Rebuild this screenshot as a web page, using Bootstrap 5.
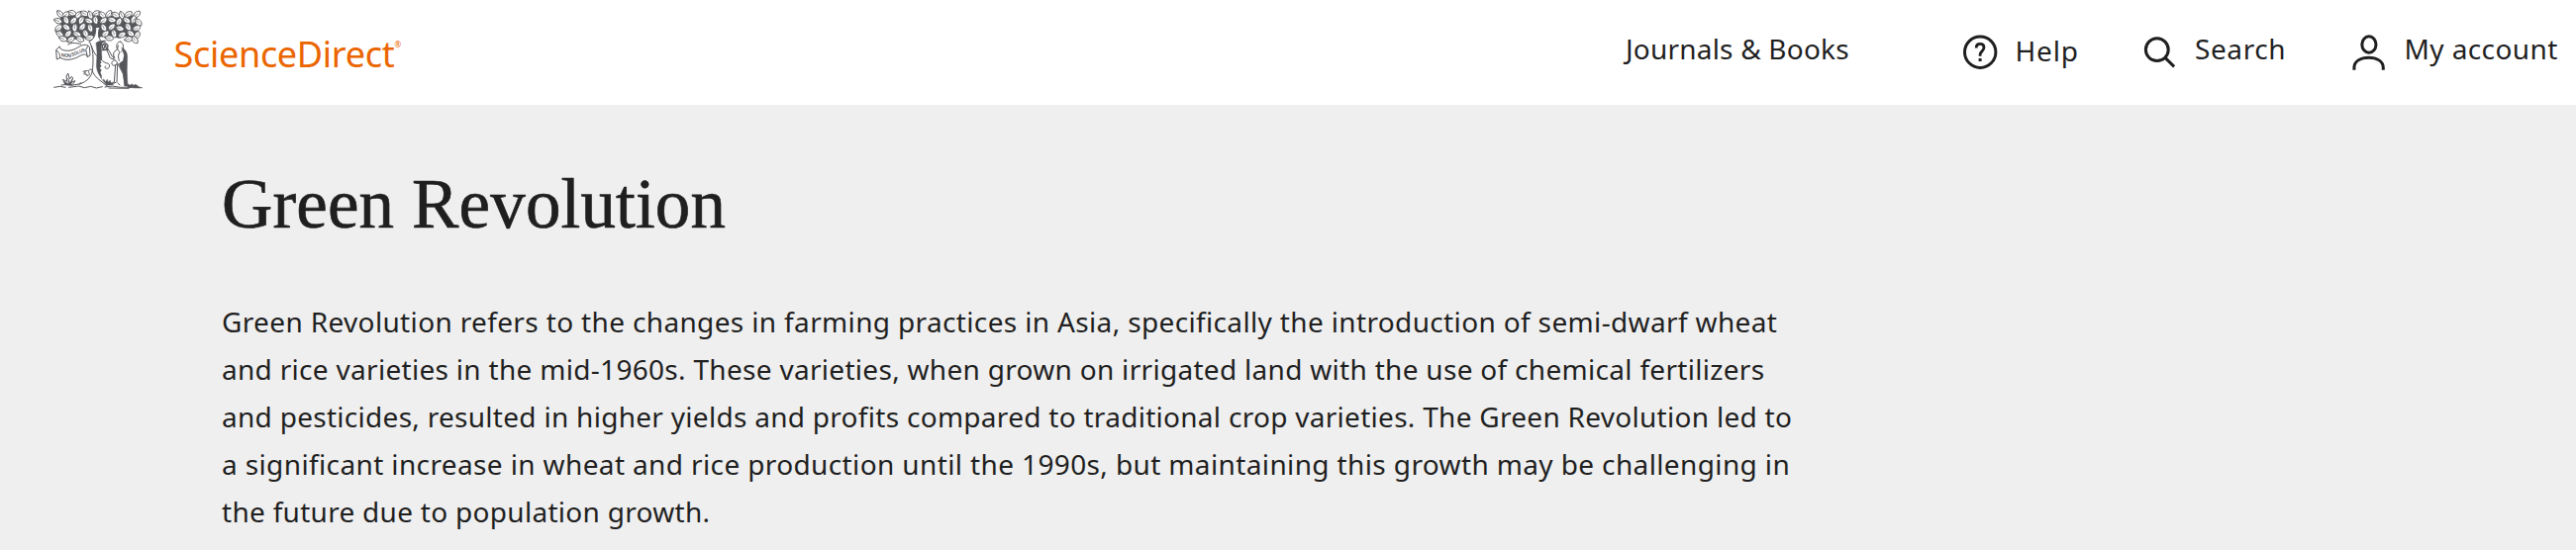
<!DOCTYPE html>
<html lang="en">

<head>
    <meta charset="UTF-8">
    <meta name="viewport" content="width=device-width, initial-scale=1">
    <title>Green Revolution | ScienceDirect</title>
    <link href="https://cdn.jsdelivr.net/npm/bootstrap@5.3.0/dist/css/bootstrap.min.css" rel="stylesheet">
    <style>
        body {
            background: #efefef;
            color: #1f1f1f;
            font-family: "Noto Sans", sans-serif;
            font-size: 28px;
            line-height: 48px;
        }

        .site-header {
            height: 106px;
            padding: 10px 17.5px 0 54px;
        }

        .brand-name {
            margin: 21px 0 0 31.5px;
            color: #eb6500;
            font-size: 36px;
            letter-spacing: -0.3px;
        }

        .brand-mark {
            margin-top: 30px;
            color: #eb6500;
            font-size: 8px;
            line-height: 10px;
        }

        .site-nav {
            padding-top: 15px;
        }

        .site-nav a {
            color: inherit;
            text-decoration: none;
            white-space: nowrap;
        }

        .nav-icon {
            width: 40px;
            height: 44px;
            fill: none;
            stroke: currentColor;
            stroke-width: 3;
        }

        .link-journals {
            width: 225px;
            margin-right: 113px;
            letter-spacing: 0.2px;
        }

        .link-help {
            width: 120px;
            margin: 2px 60px 0 0;
            gap: 15.5px;
            letter-spacing: 0.8px;
        }

        .link-search {
            width: 149.5px;
            margin-right: 62.5px;
            gap: 17px;
            letter-spacing: 0.6px;
        }

        .link-account {
            width: 212.5px;
            gap: 16.5px;
            letter-spacing: 0.4px;
        }

        .topic {
            padding: 60px 0 0 224px;
        }

        .topic h1 {
            margin-bottom: 55px;
            font-family: "Liberation Serif", serif;
            font-size: 71px;
            font-weight: 400;
            line-height: 80px;
            letter-spacing: 0.15px;
            -webkit-text-stroke: 0.7px #1f1f1f;
        }

        .topic p span {
            display: block;
            white-space: nowrap;
        }

        .ls-1 { letter-spacing: 0.352px; }
        .ls-2 { letter-spacing: 0.3px; }
        .ls-3 { letter-spacing: 0.285px; }
        .ls-4 { letter-spacing: 0.375px; }
        .ls-5 { letter-spacing: 0.29px; }
    </style>
</head>

<body>

    <header class="site-header bg-white d-flex justify-content-between align-items-start">
        <div class="d-flex align-items-start">
            <svg width="90" height="80" viewBox="42 30 270 240" fill="none" stroke="#55565a" stroke-width="3"
                stroke-linecap="round" stroke-linejoin="round">
                <defs>
                    <g id="leaf">
                        <path d="M-13 0C-10-10 6-11 13-2C9 9-6 11-13 0Z" fill="#fff" stroke-width="2.6" />
                        <path d="M-9 0C-3-2 1 1 3 0" stroke-width="1.8" />
                    </g>
                </defs>
                <!-- canopy -->
                <path d="M62 45L110 48 160 46 210 48 294 46 298 103 284 118 262 110 240 116 205 106 180 114 152 112 120 120 84 118 64 106Z"
                    fill="#55565a" stroke="none" />
                <g id="leaves"></g>
                <!-- trunk -->
                <path d="M152 128C163 148 163 178 161 205C160 232 146 246 120 256L190 262 203 256C190 240 182 224 182 200L183 128C177 117 176 103 181 84L170 84C169 108 165 118 152 128Z"
                    fill="#fff" stroke="none" />
                <path d="M152 128C163 148 163 178 161 205C160 232 146 246 120 256M170 82C171 104 166 118 150 127M181 86C177 102 178 112 184 122" />
                <path d="M171 130C180 123 192 122 202 124L190 130 187 142 189 180 184 184 187 190 183 194 187 201 182 206 187 212 184 220 188 230 187 237C179 226 173 215 172 200L174 160Z"
                    fill="#55565a" stroke-width="1" />
                <path d="M157 139C163 158 170 168 183 178C194 188 200 192 207 192C214 195 213 207 205 208C198 209 196 203 200 200M158 211C163 226 172 236 183 244L206 262" />
                <path d="M155 210C147 210 147 218 151 223C151 230 143 232 141 228M145 214L132 217 135 220 140 219M134 224L144 226" />
                <!-- ribbon -->
                <path d="M60 142L50 151 52 180 62 175C84 187 107 179 125 168C137 163 144 165 145 173L153 168 151 142C142 132 128 136 116 144C98 155 80 157 65 149L60 142Z"
                    fill="#fff" />
                <path d="M52 154C61 159 61 166 62 175M146 140L140 151 145 171M86 135C98 127 115 131 125 134" />
                <!-- old man and his staff -->
                <path d="M246 126C233 126 232 138 235 149L224 160 225 180 214 176 203 150M207 148L220 171 228 174M246 127C258 134 254 151 248 157M238 138L236 150 243 158M228 182C218 184 215 195 224 199L232 197 236 189 228 182" />
                <path d="M230 198L226 250M236 196L234 249M237 193L253 223 259 260M242 160C237 167 238 175 241 184M231 250L226 252M237 252L243 258" />
                <path d="M249 144C261 150 267 161 266 176L265 215 267 261 257 261 254 226 243 202 241 193 253 184 256 168Z"
                    fill="#55565a" stroke-width="1" />
                <path d="M190 137L198 130 207 137 205 149 195 151 190 145ZM195 136L203 145M202 134L195 146M190 152L206 151" stroke-width="4" />
                <!-- ground and grass -->
                <path d="M44 265L62 262 78 265M66 258C80 254 90 261 102 258L118 255 126 251M89 265L118 261 136 266 155 262 172 267 190 263M198 264L220 261 245 265 281 264M286 266L310 266M210 267L270 268" />
                <path d="M77 255L70 241 83 247 81 231 86 222 91 240 97 232 101 237 96 250 108 245 100 256Z"
                    fill="#fff" />
                <path d="M77 255L74 246 88 254 86 237 92 251 98 240 96 256Z" fill="#55565a" stroke-width="1" />
                <path d="M185 235L193 246 194 239 200 248 205 240 208 249 214 243 216 251 224 249 223 257 203 259ZM268 254L274 258 281 254 283 259 291 256 306 266 266 266Z"
                    fill="#55565a" stroke-width="1" />
                <g fill="#55565a" stroke="none" font-family="Liberation Sans, sans-serif" font-size="15" font-weight="700">
                    <text transform="translate(65 172) rotate(4)" textLength="31">NON</text>
                    <text transform="translate(99 171) rotate(-22)" textLength="43" lengthAdjust="spacingAndGlyphs">SOLUS</text>
                </g>
            </svg>
            <span class="brand-name">ScienceDirect</span>
            <span class="brand-mark">®</span>
        </div>

        <nav class="site-nav d-flex align-items-start">
            <a class="link-journals" href="#">Journals &amp; Books</a>
            <a class="link-help d-flex align-items-center" href="#">
                <svg class="nav-icon flex-shrink-0" viewBox="0 0 40 44">
                    <circle cx="20.2" cy="23.7" r="15.7" />
                    <path d="M16.2 19.4c0-2.7 1.6-4 3.9-4s3.9 1.5 3.9 3.7c0 3.7-3.9 3.8-3.9 7.2v1.4" stroke-width="2.8" />
                    <path d="M18.6 30h3v3h-3z" fill="currentColor" stroke="none" />
                </svg>
                Help
            </a>
            <a class="link-search d-flex align-items-center" href="#">
                <svg class="nav-icon flex-shrink-0" viewBox="0 0 40 44">
                    <circle cx="18.8" cy="23.2" r="11.4" />
                    <path d="M27 31.4l9.1 9" />
                </svg>
                Search
            </a>
            <a class="link-account d-flex align-items-center" href="#">
                <svg class="nav-icon flex-shrink-0" viewBox="0 0 40 44">
                    <ellipse cx="20.9" cy="18" rx="7.1" ry="8.2" />
                    <path d="M5.9 43.8v-2.3c0-6.6 6.4-10.3 14.7-10.3s14.7 3.7 14.7 10.3v2.3" />
                </svg>
                My account
            </a>
        </nav>
    </header>

    <main class="topic">
        <h1>Green Revolution</h1>
        <p class="mb-0">
            <span class="ls-1">Green Revolution refers to the changes in farming practices in Asia, specifically the introduction of semi-dwarf wheat</span>
            <span class="ls-2">and rice varieties in the mid-1960s. These varieties, when grown on irrigated land with the use of chemical fertilizers</span>
            <span class="ls-3">and pesticides, resulted in higher yields and profits compared to traditional crop varieties. The Green Revolution led to</span>
            <span class="ls-4">a significant increase in wheat and rice production until the 1990s, but maintaining this growth may be challenging in</span>
            <span class="ls-5">the future due to population growth.</span>
        </p>
    </main>

    <script>
        // x, y and rotation of each leaf in the canopy
        const leaves = [
            [62, 43, 50], [80, 45, -35], [99, 40, 20], [117, 45, 130], [136, 42, 25], [153, 46, 70], [172, 41, -20], [190, 46, 40], [210, 43, -50], [230, 46, 30], [249, 47, 70], [269, 44, -30], [295, 44, -40],
            [56, 64, 20], [80, 61, 65], [103, 63, -45], [126, 61, 120], [149, 64, 20], [169, 61, 80], [194, 63, -35], [219, 61, 15], [241, 66, -60], [264, 62, 35], [285, 60, -70], [299, 68, 50],
            [58, 85, -40], [81, 83, 35], [106, 84, 95], [130, 82, -50], [153, 85, 75], [194, 84, 60], [219, 82, -40], [243, 87, 20], [268, 82, 65], [294, 86, -25],
            [61, 104, 35], [87, 103, -45], [113, 104, 20], [139, 102, 65], [200, 103, -35], [225, 102, 75], [250, 106, -25], [276, 102, 40], [296, 107, -60],
            [71, 118, 20], [95, 120, -30], [122, 119, 30], [152, 115, -10], [211, 116, 10], [270, 119, -10], [288, 121, 55]
        ];
        document.getElementById("leaves").innerHTML = leaves
            .map(([x, y, r]) => `<use href="#leaf" transform="translate(${x} ${y}) rotate(${r})" />`)
            .join("");
    </script>

    <script src="https://cdn.jsdelivr.net/npm/bootstrap@5.3.0/dist/js/bootstrap.bundle.min.js"></script>
</body>

</html>
